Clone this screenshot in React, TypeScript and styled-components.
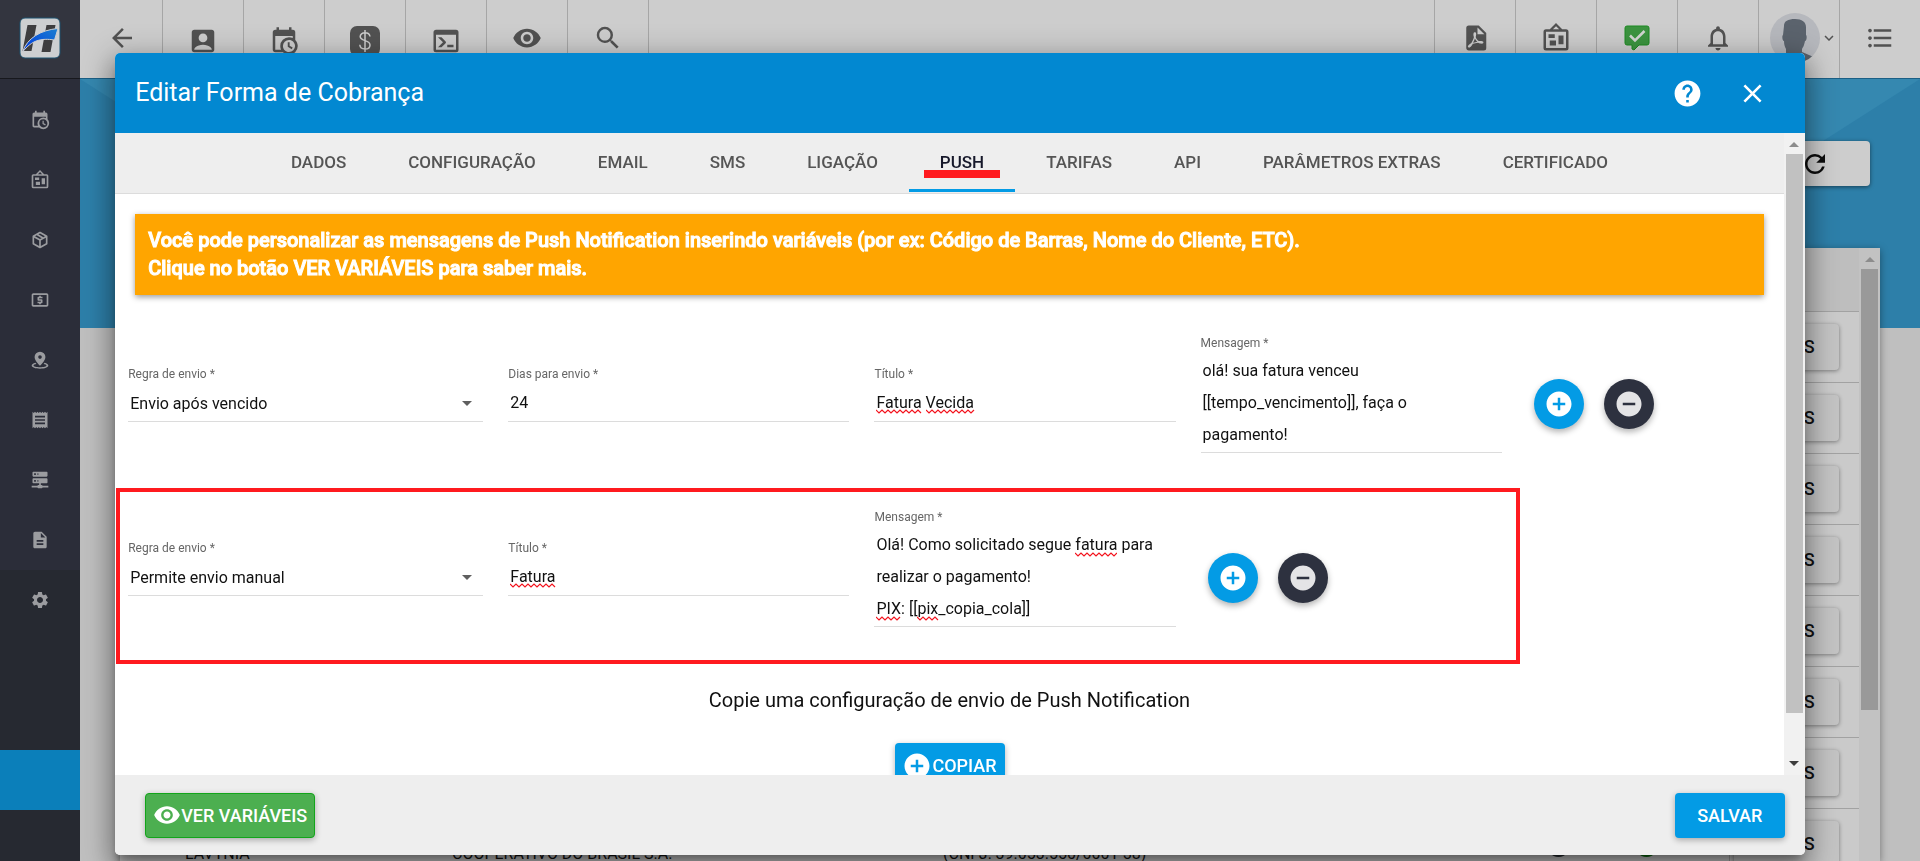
import React from "react";
import styled, { createGlobalStyle, css } from "styled-components";
import {
  MdAccountBox,
  MdAddCircle,
  MdArrowBack,
  MdClose,
  MdDescription,
  MdExpandMore,
  MdFormatListBulleted,
  MdHelp,
  MdLocalAtm,
  MdNotificationsNone,
  MdReceipt,
  MdRefresh,
  MdRemoveCircle,
  MdSearch,
  MdSettings,
  MdVisibility,
} from "react-icons/md";

const GlobalStyle = createGlobalStyle`
  *, *::before, *::after { box-sizing: border-box; }
  body { margin: 0; font-family: Roboto, "Liberation Sans", sans-serif; color: #111; overflow: hidden; }
  button, input, select, textarea { font-family: inherit; }
  svg { display: block; flex: none; }
`;

/* ---------- icons ---------- */

const paths = {
  calendarClock:
    "M15,13H16.5V15.82L18.94,17.23L18.19,18.53L15,16.69V13M19,8H5V19H9.67C9.24,18.09 9,17.07 9,16A7,7 0 0,1 16,9C17.07,9 18.09,9.24 19,9.67V8M5,21C3.89,21 3,20.1 3,19V5C3,3.89 3.89,3 5,3H6V1H8V3H16V1H18V3H19A2,2 0 0,1 21,5V11.1C22.24,12.36 23,14.09 23,16A7,7 0 0,1 16,23C14.09,23 12.36,22.24 11.1,21H5M16,11.15A4.85,4.85 0 0,0 11.15,16C11.15,18.68 13.32,20.85 16,20.85A4.85,4.85 0 0,0 20.85,16C20.85,13.32 18.68,11.15 16,11.15Z",
  board:
    "M12.04,2.5L9.53,5H14.53L12.04,2.5M4,7V20H20V7H4M12,0L17,5V5H20A2,2 0 0,1 22,7V20A2,2 0 0,1 20,22H4A2,2 0 0,1 2,20V7A2,2 0 0,1 4,5H7V5L12,0M7,18V14H12V18H7M14,17V10H18V17H14M6,12V9H11V12H6Z",
  console:
    "M20,19V7H4V19H20M20,3A2,2 0 0,1 22,5V19A2,2 0 0,1 20,21H4A2,2 0 0,1 2,19V5C2,3.89 2.9,3 4,3H20M13,17V15H18V17H13M9.58,13L5.57,9H8.4L11.7,12.3C12.09,12.69 12.09,13.33 11.7,13.72L8.42,17H5.59L9.58,13Z",
  server:
    "M13,18H14A1,1 0 0,1 15,19H22V21H15A1,1 0 0,1 14,22H10A1,1 0 0,1 9,21H2V19H9A1,1 0 0,1 10,18H11V16H4A1,1 0 0,1 3,15V11A1,1 0 0,1 4,10H20A1,1 0 0,1 21,11V15A1,1 0 0,1 20,16H13V18M4,2H20A1,1 0 0,1 21,3V7A1,1 0 0,1 20,8H4A1,1 0 0,1 3,7V3A1,1 0 0,1 4,2M9,6H10V4H9V6M9,14H10V12H9V14M5,4V6H7V4H5M5,12V14H7V12H5Z",
  box: "M21,16.5C21,16.88 20.79,17.21 20.47,17.38L12.57,21.82C12.41,21.94 12.21,22 12,22C11.79,22 11.59,21.94 11.43,21.82L3.53,17.38C3.21,17.21 3,16.88 3,16.5V7.5C3,7.12 3.21,6.79 3.53,6.62L11.43,2.18C11.59,2.06 11.79,2 12,2C12.21,2 12.41,2.06 12.57,2.18L20.47,6.62C20.79,6.79 21,7.12 21,7.5V16.5M12,4.15L10.11,5.22L16,8.61L17.96,7.5L12,4.15M6.04,7.5L12,10.85L13.96,9.75L8.08,6.35L6.04,7.5M5,15.91L11,19.29V12.58L5,9.21V15.91M19,15.91V9.21L13,12.58V19.29L19,15.91Z",
  pdf: "M14,9H19.5L14,3.5V9M7,2H15L21,8V20A2,2 0 0,1 19,22H7C5.89,22 5,21.1 5,20V4A2,2 0 0,1 7,2M11.93,12.44C12.34,13.34 12.86,14.08 13.46,14.59L13.87,14.91C13,15.07 11.8,15.35 10.53,15.84V15.84L10.42,15.88L10.92,14.84C11.37,13.97 11.7,13.18 11.93,12.44M18.41,16.25C18.59,16.07 18.68,15.84 18.69,15.59C18.72,15.39 18.67,15.2 18.57,15.04C18.28,14.57 17.53,14.35 16.29,14.35L15,14.42L14.13,13.84C13.5,13.32 12.93,12.41 12.53,11.28L12.57,11.14C12.9,9.81 13.21,8.2 12.55,7.54C12.39,7.38 12.17,7.3 11.94,7.3H11.7C11.33,7.3 11,7.69 10.91,8.07C10.54,9.4 10.76,10.13 11.13,11.34V11.35C10.88,12.23 10.56,13.25 10.05,14.28L9.09,16.08L8.2,16.57C7,17.32 6.43,18.16 6.32,18.69C6.28,18.88 6.3,19.05 6.37,19.23L6.4,19.28L6.88,19.59L7.32,19.7C8.13,19.7 9.05,18.75 10.29,16.63L10.47,16.56C11.5,16.23 12.78,16 14.5,15.81C15.53,16.32 16.74,16.55 17.5,16.55C17.94,16.55 18.24,16.44 18.41,16.25Z",
};

const PathIcon = ({ name, size }: { name: keyof typeof paths; size: number }) => (
  <svg width={size} height={size} viewBox="0 0 24 24" fill="currentColor" aria-hidden>
    <path fillRule="evenodd" d={paths[name]} />
  </svg>
);

const MoneyIcon = () => (
  <svg width="30" height="30" viewBox="0 0 30 30" aria-hidden>
    <rect width="30" height="30" rx="7" fill="currentColor" />
    <path
      d="M20 10.5C19.6 8 17.6 6.8 15 6.8c-2.800 0-4.800 1.400-4.800 3.800 0 5.400 9.800 2.600 9.800 8.300 0 2.500-2.100 4.100-5 4.100-3 0-5-1.500-5.200-4.200M15 4v22"
      fill="none"
      stroke="#cdcdcd"
      strokeWidth="1.500"
    />
  </svg>
);

const PinIcon = () => (
  <svg width="20" height="20" viewBox="0 0 24 24" fill="currentColor" aria-hidden>
    <path
      fillRule="evenodd"
      d="M12 2a6.500 6.500 0 0 1 6.500 6.500C18.500 13 12 19 12 19S5.500 13 5.500 8.500A6.500 6.500 0 0 1 12 2m0 4.300a2.200 2.200 0 1 0 0 4.400 2.200 2.200 0 0 0 0-4.400"
    />
    <path d="M6.500 15.300C3.800 16 2 17.300 2 18.700 2 20.900 6.500 22.500 12 22.500s10-1.600 10-3.800c0-1.400-1.800-2.700-4.500-3.400l-1.200 1.600c2 .3 3.500 1 3.500 1.800 0 1.100-3.500 2-7.800 2s-7.800-.9-7.800-2c0-.8 1.500-1.500 3.500-1.800z" />
  </svg>
);

const ApprovedIcon = () => (
  <svg width="26" height="26" viewBox="0 0 26 26" aria-hidden>
    <path d="M3 1h20a2 2 0 0 1 2 2v15a2 2 0 0 1-2 2h-8l-5 5-2-1v-4H3a2 2 0 0 1-2-2V3a2 2 0 0 1 2-2z" fill="#3c9440" stroke="#1c8a22" />
    <path d="M6 10.500l5 5L20.500 6" fill="none" stroke="#d2d6d2" strokeWidth="2.500" />
  </svg>
);

const Logo = () => (
  <svg width="42" height="42" viewBox="0 0 42 42" aria-label="Logotipo">
    <defs>
      <linearGradient id="swoosh" x1="0" y1="1" x2="1" y2="0">
        <stop offset="0" stopColor="#0038e0" />
        <stop offset="1" stopColor="#1b7fd0" />
      </linearGradient>
    </defs>
    <rect x="1" y="1" width="40" height="40" rx="5" fill="#cdcfd1" stroke="#1d5370" />
    <path d="M8.500 8h9l-5 26h-9zM27.500 8h9l-5 27h-9z" fill="#3d3d3f" />
    <path d="M3.500 35C8 21 22 13 39 11.500L35.500 23C22 21 13 23 3.500 35z" fill="url(#swoosh)" stroke="#cdcfd1" />
  </svg>
);

const Avatar = () => (
  <svg width="50" height="50" viewBox="0 0 50 50" role="img" aria-label="Foto do usuário">
    <defs>
      <clipPath id="face"><circle cx="25" cy="25" r="25" /></clipPath>
    </defs>
    <g clipPath="url(#face)">
      <rect width="50" height="50" fill="#b6b8bd" />
      <path d="M14 13c0-5 4-7 11-7s11 3 11 8v8c1 0 1 6-1 6-1 5-2 6-3 8v3l14 6v8H4v-8l12-5v-4c-1-2-2-4-2-8-2 0-2-6-1-6z" fill="#5b636d" />
    </g>
  </svg>
);

/* ---------- application behind the dialog ---------- */

const Shell = styled.div`
  display: flex;
  height: 100vh;
  overflow: hidden;
`;

const Sidebar = styled.aside`
  display: flex;
  flex-direction: column;
  flex: 0 0 80px;
  background: #262931;
  color: #9b9ca0;
`;

const Brand = styled.a`
  display: flex;
  justify-content: center;
  align-items: center;
  flex: 0 0 79px;
  padding-bottom: 3px;
  background: #33353f;
  border-bottom: 1px solid #17181d;
`;

const SideNav = styled.nav`
  flex: none;
  padding-top: 11px;
  background: #2b2d39;
`;

const SideLink = styled.a`
  display: flex;
  align-items: center;
  justify-content: center;
  height: 60px;
  color: inherit;
`;

const SideAction = styled.button`
  flex: 0 0 60px;
  margin: auto 0 51px;
  border: 0;
  background: #0b7fba;
`;

const Main = styled.div`
  flex: 1;
  min-width: 0;
  display: flex;
  flex-direction: column;
  background: #bfbfbf;
`;

const TopBar = styled.header`
  display: flex;
  justify-content: space-between;
  flex: 0 0 79px;
  padding-left: 2px;
  background: #cdcdcd;
  border-bottom: 1px solid #1b5f85;
`;

const TopGroup = styled.div`
  display: flex;
`;

const TopButton = styled.button<{ $edge: "left" | "right"; $low?: boolean }>`
  display: flex;
  align-items: center;
  justify-content: center;
  width: 81px;
  padding: ${(p) => (p.$low ? "4px 0 0" : "0 0 2px")};
  border: 0;
  background: none;
  color: #525252;
  ${(p) =>
    p.$edge === "left"
      ? css`border-right: 1px solid #a6a6a6;`
      : css`border-left: 1px solid #a6a6a6;`}
`;

const UserBadge = styled.span`
  display: flex;
  align-items: center;
  padding-left: 9px;
`;

const Page = styled.main`
  position: relative;
  flex: 1;
  min-height: 0;
  overflow: hidden;
  display: flex;
  flex-direction: column;
  padding: 62px 40px 0;
`;

const HeroArt = styled.svg`
  position: absolute;
  top: 0;
  left: 0;
  width: 100%;
  height: 249px;
`;

const Actions = styled.div`
  position: relative;
  display: flex;
  justify-content: flex-end;
  padding-right: 10px;
`;

const RefreshButton = styled.button`
  display: flex;
  align-items: center;
  justify-content: center;
  width: 110px;
  height: 45px;
  border: 0;
  border-radius: 4px;
  background: #cdcdcd;
  color: #0c0c0c;
  box-shadow: 0 1px 4px rgba(0, 0, 0, 0.5);
`;

const Card = styled.section`
  position: relative;
  display: flex;
  flex: 1;
  min-height: 0;
  margin-top: 62px;
  background: #cacaca;
  box-shadow: 0 2px 8px rgba(0, 0, 0, 0.4);
`;

const CardBody = styled.div`
  flex: 1;
  overflow: hidden;
`;

const Table = styled.table`
  width: 100%;
  border-collapse: collapse;
  table-layout: fixed;
  font-size: 16px;
  line-height: 20px;
`;

const HeadCell = styled.th<{ $width: string }>`
  width: ${(p) => p.$width};
  height: 63px;
  background: #bebebe;
  border-bottom: 1px solid #a2a2a2;
`;

const Cell = styled.td<{ $last?: boolean }>`
  height: 71px;
  padding: 0 0 15px;
  vertical-align: bottom;
  border-bottom: 1px solid #a2a2a2;
  ${(p) =>
    p.$last &&
    css`
      padding: 0 20px 0 4px;
      vertical-align: middle;
      border-left: 1px solid #a2a2a2;
    `}
`;

const Dot = styled.span<{ $color: string }>`
  display: block;
  width: 25px;
  height: 25px;
  margin-bottom: 7px;
  border-radius: 50%;
  background: ${(p) => p.$color};
`;

const RowButton = styled.button`
  display: block;
  width: 100%;
  height: 46px;
  padding: 0;
  border: 0;
  border-radius: 4px;
  background: #c3c3c3;
  color: #111;
  font-size: 18px;
  font-weight: 500;
  box-shadow: 0 1px 4px rgba(0, 0, 0, 0.4);
`;

/* ---------- scroll bars ---------- */

const Track = styled.div<{ $dim?: boolean }>`
  display: flex;
  flex-direction: column;
  align-items: center;
  flex: 0 0 21px;
  background: ${(p) => (p.$dim ? "#c2c2c2" : "#f1f1f1")};
`;

const Arrow = styled.span<{ $down?: boolean }>`
  flex: none;
  margin: ${(p) => (p.$down ? "auto 0 9px" : "9px 0 7px")};
  border: 5px solid transparent;
  border-${(p) => (p.$down ? "top" : "bottom")}: 5px solid ${(p) => (p.$down ? "#3c3c3c" : "#8c8c8c")};
  border-${(p) => (p.$down ? "bottom" : "top")}: 0;
`;

const Thumb = styled.span<{ $dim?: boolean }>`
  flex: none;
  width: 17px;
  height: ${(p) => (p.$dim ? "72%" : "87%")};
  background: ${(p) => (p.$dim ? "#999" : "#c1c1c1")};
`;

/* ---------- dialog ---------- */

const Overlay = styled.div`
  position: fixed;
  inset: 0;
  display: flex;
  justify-content: center;
  padding: 53px 0 6px;
`;

const Dialog = styled.div`
  display: flex;
  flex-direction: column;
  width: 88%;
  border-radius: 5px;
  overflow: hidden;
  background: #fff;
  box-shadow: 0 8px 10px -4px rgba(0, 0, 0, 0.3), 0 14px 24px 3px rgba(0, 0, 0, 0.25), 0 6px 30px 6px rgba(0, 0, 0, 0.2);
`;

const DialogHeader = styled.header`
  display: flex;
  align-items: center;
  flex: 0 0 80px;
  padding: 0 37px 0 20px;
  background: #0288d1;
  color: #fff;
`;

const Title = styled.h2`
  flex: 1;
  margin: 0;
  font-size: 25px;
  line-height: 32px;
  font-weight: 400;
`;

const HeaderButton = styled.button`
  display: flex;
  padding: 0;
  margin-left: 34px;
  border: 0;
  background: none;
  color: inherit;
`;

const DialogContent = styled.div`
  display: flex;
  flex: 1;
  min-height: 0;
`;

const Scroller = styled.div`
  flex: 1;
  min-width: 0;
  overflow: auto;
  scrollbar-width: none;
`;

const Tabs = styled.div`
  display: flex;
  justify-content: center;
  height: 61px;
  background: #eee;
  border-bottom: 1px solid #dcdcdc;
`;

const Tab = styled.button<{ $active: boolean }>`
  position: relative;
  height: 60px;
  padding: 0 31px 2px;
  border: 0;
  background: none;
  color: ${(p) => (p.$active ? "#16182a" : "#555")};
  font-size: 17px;
  font-weight: 500;
  ${(p) => p.$active && css`box-shadow: inset 0 -1px #eee, inset 0 -4px #039be5;`}
`;

const TabMark = styled.span`
  position: absolute;
  left: 15px;
  right: 15px;
  bottom: 15px;
  height: 8px;
  background: #ff1a1f;
`;

const Notice = styled.p`
  margin: 20px 20px 22px;
  padding: 12px 13px 13px;
  background: #ffa500;
  color: #fff;
  font-size: 20px;
  line-height: 28px;
  font-weight: 500;
  -webkit-text-stroke: 1px #fff;
  box-shadow: 0 2px 6px rgba(0, 0, 0, 0.4);
`;

const RuleRow = styled.div`
  position: relative;
  display: grid;
  grid-template-columns: 355fr 341fr 301fr 301fr 257fr;
  column-gap: 25px;
  align-items: center;
  height: 174px;
  padding-left: 13px;
`;

const Highlight = styled.div`
  position: absolute;
  top: -3px;
  left: 1px;
  right: 264px;
  height: 176px;
  border: 4px solid #ff1a1f;
  pointer-events: none;
`;

const FieldBox = styled.div`
  display: flex;
  flex-direction: column;
  gap: 4px;
  padding-bottom: 20px;
`;

const Label = styled.label`
  font-size: 12px;
  line-height: 16px;
  color: #666;
`;

const ControlBox = styled.div`
  position: relative;
  display: flex;
`;

const controlStyle = css`
  width: 100%;
  margin: 0;
  border: 0;
  border-bottom: 1px solid #dcdcdc;
  border-radius: 0;
  outline: 0;
  background: none;
  color: #111;
  font-size: 16px;
`;

const TextInput = styled.input`
  ${controlStyle}
  height: 36px;
  padding: 0 2px 2px;
`;

const SelectInput = styled.select`
  ${controlStyle}
  appearance: none;
  height: 36px;
  padding: 0 2px;
`;

const Caret = styled.span`
  position: absolute;
  right: 11px;
  top: 15px;
  border: 5px solid transparent;
  border-top-color: #5f5f5f;
  border-bottom: 0;
  pointer-events: none;
`;

const TextArea = styled.textarea`
  ${controlStyle}
  height: 98px;
  padding: 0 2px;
  line-height: 32px;
  resize: none;
  overflow: hidden;
`;

const SpellMark = styled.svg`
  position: absolute;
  pointer-events: none;
`;

const RoundButtons = styled.div`
  display: flex;
  gap: 20px;
  padding-left: 7px;
`;

const RoundButton = styled.button<{ $tone: "add" | "remove" }>`
  display: flex;
  align-items: center;
  justify-content: center;
  width: 50px;
  height: 50px;
  padding: 0;
  border: 0;
  border-radius: 50%;
  background: ${(p) => (p.$tone === "add" ? "#039be5" : "#2d313f")};
  color: ${(p) => (p.$tone === "add" ? "#fff" : "#e4e4e6")};
  box-shadow: 0 3px 6px rgba(0, 0, 0, 0.3);
`;

const CopySection = styled.section`
  display: flex;
  flex-direction: column;
  align-items: center;
  gap: 31px;
  padding-top: 23px;
`;

const CopyTitle = styled.h3`
  margin: 0;
  font-size: 20px;
  line-height: 24px;
  font-weight: 400;
`;

const ActionButton = styled.button<{ $tone?: "success" }>`
  display: flex;
  align-items: center;
  justify-content: center;
  flex: none;
  min-width: 110px;
  height: 45px;
  padding: 0 7px;
  border: ${(p) => (p.$tone ? "1px solid #12a51a" : "0")};
  border-radius: 4px;
  background: ${(p) => (p.$tone ? "#4caf50" : "#039be5")};
  color: #fff;
  font-size: 18px;
  font-weight: 500;
  box-shadow: 0 2px 6px rgba(0, 0, 0, 0.3);
`;

const DialogFooter = styled.footer`
  display: flex;
  align-items: center;
  justify-content: space-between;
  flex: 0 0 80px;
  padding: 0 20px 0 30px;
  background: #eee;
`;

/* ---------- composed parts ---------- */

interface Mark {
  left: number;
  top: number;
  width: number;
}

const zigzag = (width: number) => {
  let d = "M0 1";
  for (let x = 3, low = true; x <= width; x += 3, low = !low) d += `L${x} ${low ? 4 : 1}`;
  return d;
};

const Marks = ({ marks }: { marks?: Mark[] }) => (
  <>
    {marks?.map((m) => (
      <SpellMark key={`${m.left}-${m.top}`} width={m.width} height="5" style={{ left: m.left, top: m.top }} aria-hidden>
        <path d={zigzag(m.width)} fill="none" stroke="#f3141e" strokeWidth="1.2" />
      </SpellMark>
    ))}
  </>
);

const SelectField = ({ id, value }: { id: string; value: string }) => (
  <FieldBox>
    <Label htmlFor={id}>Regra de envio *</Label>
    <ControlBox>
      <SelectInput id={id} defaultValue={value}>
        <option>{value}</option>
      </SelectInput>
      <Caret />
    </ControlBox>
  </FieldBox>
);

const InputField = ({ id, label, value, marks }: { id: string; label: string; value: string; marks?: Mark[] }) => (
  <FieldBox>
    <Label htmlFor={id}>{label}</Label>
    <ControlBox>
      <TextInput id={id} defaultValue={value} spellCheck={false} />
      <Marks marks={marks} />
    </ControlBox>
  </FieldBox>
);

const MessageField = ({ id, value, marks }: { id: string; value: string; marks?: Mark[] }) => (
  <FieldBox>
    <Label htmlFor={id}>Mensagem *</Label>
    <ControlBox>
      <TextArea id={id} rows={3} defaultValue={value} spellCheck={false} />
      <Marks marks={marks} />
    </ControlBox>
  </FieldBox>
);

const RowActions = () => (
  <RoundButtons>
    <RoundButton $tone="add" aria-label="Adicionar"><MdAddCircle size={30} /></RoundButton>
    <RoundButton $tone="remove" aria-label="Remover"><MdRemoveCircle size={30} /></RoundButton>
  </RoundButtons>
);

const sideLinks = [
  { label: "Agenda", icon: <PathIcon name="calendarClock" size={20} /> },
  { label: "Mural", icon: <PathIcon name="board" size={20} /> },
  { label: "Produtos", icon: <PathIcon name="box" size={20} /> },
  { label: "Financeiro", icon: <MdLocalAtm size={20} /> },
  { label: "Mapa", icon: <PinIcon /> },
  { label: "Notas", icon: <MdReceipt size={20} /> },
  { label: "Servidores", icon: <PathIcon name="server" size={20} /> },
  { label: "Documentos", icon: <MdDescription size={20} /> },
];

const leftTools = [
  { label: "Voltar", icon: <MdArrowBack size={30} /> },
  { label: "Clientes", icon: <MdAccountBox size={30} />, low: true },
  { label: "Agenda", icon: <PathIcon name="calendarClock" size={30} />, low: true },
  { label: "Financeiro", icon: <MoneyIcon />, low: true },
  { label: "Terminal", icon: <PathIcon name="console" size={30} />, low: true },
  { label: "Visualizar", icon: <MdVisibility size={30} /> },
  { label: "Pesquisar", icon: <MdSearch size={30} /> },
];

const rightTools = [
  { label: "PDF", icon: <PathIcon name="pdf" size={30} /> },
  { label: "Mural", icon: <PathIcon name="board" size={30} /> },
  { label: "Aprovações", icon: <ApprovedIcon /> },
  { label: "Notificações", icon: <MdNotificationsNone size={30} /> },
  { label: "Usuário", icon: <UserBadge><Avatar /><MdExpandMore size={18} /></UserBadge> },
  { label: "Menu", icon: <MdFormatListBulleted size={30} /> },
];

const tabs = ["DADOS", "CONFIGURAÇÃO", "EMAIL", "SMS", "LIGAÇÃO", "PUSH", "TARIFAS", "API", "PARÂMETROS EXTRAS", "CERTIFICADO"];
const columnWidths = ["65px", "267px", "491px", "603px", "88px", "95px", "130px"];

const Background = () => (
  <Shell>
    <Sidebar>
      <Brand href="#inicio"><Logo /></Brand>
      <SideNav>
        {sideLinks.map((l) => (
          <SideLink key={l.label} href="#" aria-label={l.label}>{l.icon}</SideLink>
        ))}
      </SideNav>
      <SideLink href="#" aria-label="Configurações"><MdSettings size={20} /></SideLink>
      <SideAction aria-label="Recolher menu" />
    </Sidebar>
    <Main>
      <TopBar>
        <TopGroup>
          {leftTools.map((t) => (
            <TopButton key={t.label} $edge="left" $low={t.low} aria-label={t.label}>{t.icon}</TopButton>
          ))}
        </TopGroup>
        <TopGroup>
          {rightTools.map((t) => (
            <TopButton key={t.label} $edge="right" aria-label={t.label}>{t.icon}</TopButton>
          ))}
        </TopGroup>
      </TopBar>
      <Page>
        <HeroArt viewBox="0 0 1840 249" preserveAspectRatio="none" aria-hidden>
          <rect width="1840" height="249" fill="#2d7fa9" />
          <path d="M0 0H1840L1450 249H390z" fill="#3588b0" />
        </HeroArt>
        <Actions>
          <RefreshButton aria-label="Atualizar"><MdRefresh size={30} /></RefreshButton>
        </Actions>
        <Card>
          <CardBody>
            <Table>
              <thead>
                <tr>{columnWidths.map((w) => <HeadCell key={w} $width={w} />)}</tr>
              </thead>
              <tbody>
                {Array.from({ length: 8 }, (_, i) => (
                  <tr key={i}>
                    <Cell />
                    <Cell>{i === 7 && "LAVYNIA"}</Cell>
                    <Cell>{i === 7 && "COOPERATIVO DO BRASIL S.A."}</Cell>
                    <Cell>{i === 7 && "(CNPJ: 39.053.550/0001-38)"}</Cell>
                    <Cell><Dot $color="#23282d" /></Cell>
                    <Cell><Dot $color="#0a6b0d" /></Cell>
                    <Cell $last><RowButton>AÇÕES</RowButton></Cell>
                  </tr>
                ))}
              </tbody>
            </Table>
          </CardBody>
          <Track $dim><Arrow /><Thumb $dim /></Track>
        </Card>
      </Page>
    </Main>
  </Shell>
);

export default function App() {
  return (
    <>
      <GlobalStyle />
      <Background />
      <Overlay>
        <Dialog role="dialog" aria-modal="true" aria-labelledby="titulo-dialogo">
          <DialogHeader>
            <Title id="titulo-dialogo">Editar Forma de Cobrança</Title>
            <HeaderButton aria-label="Ajuda"><MdHelp size={31} /></HeaderButton>
            <HeaderButton aria-label="Fechar"><MdClose size={31} /></HeaderButton>
          </DialogHeader>
          <DialogContent>
            <Scroller>
              <Tabs role="tablist">
                {tabs.map((t) => (
                  <Tab key={t} role="tab" aria-selected={t === "PUSH"} $active={t === "PUSH"}>
                    {t}
                    {t === "PUSH" && <TabMark />}
                  </Tab>
                ))}
              </Tabs>
              <Notice>
                Você pode personalizar as mensagens de Push Notification inserindo variáveis (por ex: Código de Barras, Nome do Cliente, ETC).
                <br />
                Clique no botão VER VARIÁVEIS para saber mais.
              </Notice>
              <RuleRow>
                <SelectField id="regra-1" value="Envio após vencido" />
                <InputField id="dias-1" label="Dias para envio *" value="24" />
                <InputField
                  id="titulo-1"
                  label="Título *"
                  value="Fatura Vecida"
                  marks={[{ left: 2, top: 23, width: 46 }, { left: 52, top: 23, width: 49 }]}
                />
                <MessageField id="mensagem-1" value={"olá! sua fatura venceu\n[[tempo_vencimento]], faça o\npagamento!"} />
                <RowActions />
              </RuleRow>
              <RuleRow>
                <SelectField id="regra-2" value="Permite envio manual" />
                <InputField id="titulo-2" label="Título *" value="Fatura" marks={[{ left: 2, top: 23, width: 46 }]} />
                <MessageField
                  id="mensagem-2"
                  value={"Olá! Como solicitado segue fatura para\nrealizar o pagamento!\nPIX: [[pix_copia_cola]]"}
                  marks={[
                    { left: 201, top: 23, width: 42 },
                    { left: 2, top: 87, width: 25 },
                    { left: 43, top: 87, width: 22 },
                  ]}
                />
                <RowActions />
                <Highlight />
              </RuleRow>
              <CopySection>
                <CopyTitle>Copie uma configuração de envio de Push Notification</CopyTitle>
                <ActionButton><MdAddCircle size={30} />COPIAR</ActionButton>
              </CopySection>
            </Scroller>
            <Track><Arrow /><Thumb /><Arrow $down /></Track>
          </DialogContent>
          <DialogFooter>
            <ActionButton $tone="success"><MdVisibility size={28} />VER VARIÁVEIS</ActionButton>
            <ActionButton>SALVAR</ActionButton>
          </DialogFooter>
        </Dialog>
      </Overlay>
    </>
  );
}
